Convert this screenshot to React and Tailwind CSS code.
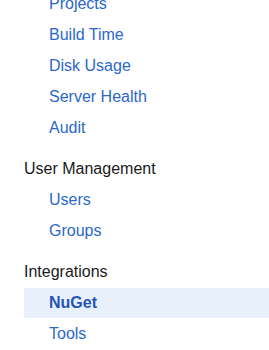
export default function App() {
  const link = "block h-[30px] leading-[30px] mb-[1px] pl-[25px] text-[#2b68c9]";
  const head = "mt-[11px] mb-[1px] h-[30px] leading-[30px] text-[#1a1a1a]";
  return (
    <div className="w-[269px] h-[350px] overflow-hidden bg-white text-[16px]" style={{ fontFamily: '"Liberation Sans", Arial, sans-serif' }}>
      <div className="pl-[24px] mt-[-11px]">
        <a className={link}>Projects</a>
        <a className={link}>Build Time</a>
        <a className={link}>Disk Usage</a>
        <a className={link}>Server Health</a>
        <a className={link}>Audit</a>
        <div className={head}>User Management</div>
        <a className={link}>Users</a>
        <a className={link}>Groups</a>
        <div className={head}>Integrations</div>
        <a className={link + " font-bold bg-[#e8f1fb] text-[#2356b3]"}>NuGet</a>
        <a className={link}>Tools</a>
      </div>
    </div>
  );
}
